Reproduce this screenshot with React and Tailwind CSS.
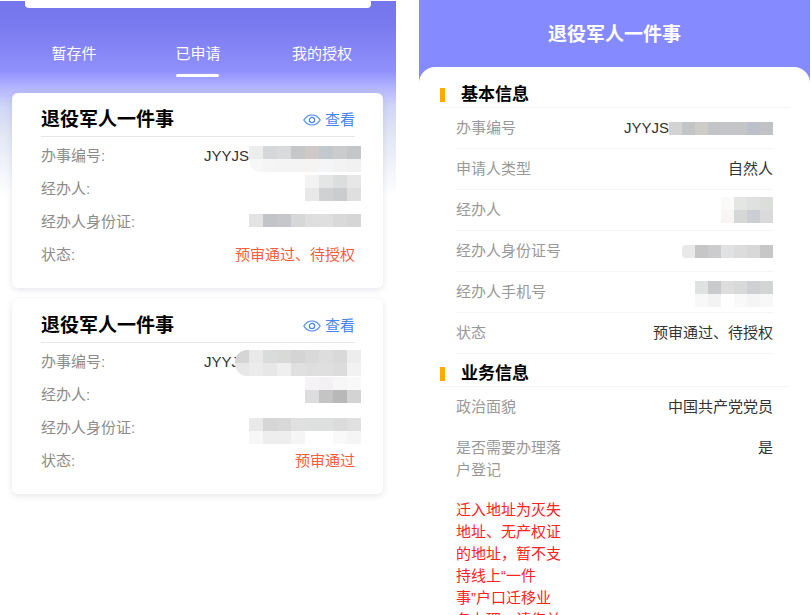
import React, { useState } from 'react';

const tabs = ['暂存件', '已申请', '我的授权'];

// Censored values, one colour per block, row by row ("" leaves the block empty)
const masks = {
  cardNo1: [
    ['#ededed', '#d5d7d8', '#d9dadb', '#c5c7c9', '#cfcac8', '#c3c8cf', '#cbcccd', '#c5c6c7'],
    ['#f7f7f7', '#f5f5f5', '#f4f4f4', '#f4f4f4', '#f5f4f3', '#f4f5f6', '#f3f3f3', '#f1f1f1'],
  ],
  cardName1: [
    ['#f3f3f3', '#e4e5e5', '#dcdedd', '#e6e7e6'],
    ['#e8e8e8', '#cfd1d2', '#cacccd', '#dfdfdf'],
  ],
  cardId1: [['#e3e3e4', '#c3c4c8', '#c6c7ca', '#d6d7d8', '#dddedd', '#dfdfdf', '#d9d9da', '#d6d6d7']],
  cardNo2: [
    ['#d5d5d5', '#e9e9e9', '#dadbdb', '#d8dad8', '#d4d4d4', '#d9d9d9', '#dddddd', '#d9d9d9', '#ededed'],
    ['#e7e7e7', '#ebebeb', '#e7e7e7', '#efefef', '#e0e0e0', '#dedede', '#dfdfdf', '#dcdcdc', '#f2f2f2'],
  ],
  cardName2: [
    ['#f5f3f5', '#f3f1f3', '#f7f7f7', '#f9f9f9'],
    ['#dddcde', '#c4c4c5', '#b8b8b9', '#d3d3d4'],
  ],
  cardId2: [
    ['#e9e9e9', '#d6d6d6', '#d8d8d8', '#e0e0e0', '#dee0df', '#dee0df', '#dbdcdb', '#e0e0e0'],
    ['#f7f7f7', '#eeeeee', '#eeeeee', '#f5f5f5', '', '', '#f9f9f9', '#f5f5f5'],
  ],
  detailNo: [['#d3d3d4', '#c3c4c6', '#cdccc8', '#c2c4c8', '#c3c5c9', '#c4c5c7', '#bdc0c9', '#c0c2c5']],
  detailName: [
    ['#fafaf9', '#e4e6e4', '#dfe1e0', '#dcdedc'],
    ['#f7f6f4', '#d6d8d7', '#ccced3', '#dadada'],
  ],
  detailId: [['#e9e9e9', '#c6c6c7', '#ccccce', '#e1e2e3', '#dcdcdd', '#d8d8d9', '#c7c7c8']],
  detailPhone: [
    ['#e0e1e1', '#c9cacb', '#dddddd', '#d8d9d9', '#cfd0d1', '#d3d4d4'],
    ['#f8f8f8', '#f3f3f3', '', '#f9f9f9', '#f5f5f5', '#f8f8f8'],
  ],
};

const applications = [
  {
    title: '退役军人一件事',
    rows: [
      { label: '办事编号', value: 'JYYJS', mask: masks.cardNo1, maskClass: 'rounded-bl-xl mt-1' },
      { label: '经办人', mask: masks.cardName1, maskClass: 'mb-1' },
      { label: '经办人身份证', mask: masks.cardId1, maskClass: 'mb-1' },
      { label: '状态', value: '预审通过、待授权', status: true },
    ],
  },
  {
    title: '退役军人一件事',
    rows: [
      { label: '办事编号', value: 'JYYJ', mask: masks.cardNo2, maskClass: 'rounded-l-xl -ml-1' },
      { label: '经办人', mask: masks.cardName2, maskClass: '-mt-3' },
      { label: '经办人身份证', mask: masks.cardId2, maskClass: 'mt-1' },
      { label: '状态', value: '预审通过', status: true },
    ],
  },
];

const basicInfo = [
  { label: '办事编号', value: 'JYYJS', mask: masks.detailNo },
  { label: '申请人类型', value: '自然人' },
  { label: '经办人', mask: masks.detailName },
  { label: '经办人身份证号', mask: masks.detailId, maskClass: 'rounded-l' },
  { label: '经办人手机号', mask: masks.detailPhone, maskClass: 'mt-1' },
  { label: '状态', value: '预审通过、待授权' },
];

const businessInfo = [
  { label: '政治面貌', value: '中国共产党党员' },
  { label: '是否需要办理落户登记', value: '是' },
];

const Mask = ({ cells, size, className = '' }) => {
  const cols = cells[0].length;
  return (
    <svg
      width={cols * size}
      height={cells.length * 13}
      viewBox={`0 0 ${cols} ${cells.length}`}
      preserveAspectRatio="none"
      shapeRendering="crispEdges"
      className={`shrink-0 ${className}`}
      aria-hidden="true"
    >
      {cells.map((row, y) =>
        row.map((color, x) => color && <rect key={`${x}-${y}`} x={x} y={y} width="1" height="1" fill={color} />)
      )}
    </svg>
  );
};

const EyeIcon = () => (
  <svg viewBox="0 0 18 14" className="w-[18px] h-[14px]" fill="none" stroke="currentColor" strokeWidth="1.2">
    <path d="M.8 6C3 2.600 5.800 1 9 1s6 1.600 8.200 5c-2.200 3.400-5 5-8.200 5S3 9.400.8 6z" />
    <circle cx="9" cy="6" r="2.600" />
  </svg>
);

const ApplicationCard = ({ item }) => (
  <article className="bg-white rounded-md shadow-[0_2px_6px_rgba(60,70,110,0.13)] pl-[29px] pr-7 pt-3 pb-4">
    <div className="flex items-center justify-between h-8 border-b border-gray-200">
      <h2 className="text-[19px] font-bold text-black">{item.title}</h2>
      <button className="flex items-center gap-1 text-[15px] text-[#4a86f0] cursor-pointer">
        <EyeIcon />
        查看
      </button>
    </div>
    <dl className="pt-[3px]">
      {item.rows.map((row) => (
        <div key={row.label} className="flex items-center justify-between h-[33px]">
          <dt className="text-[#8c8c8c]">{row.label}:</dt>
          <dd className={`flex items-center ${row.status ? 'text-[#fa5c3c]' : 'text-[#333]'} ${row.mask ? '-mr-[6px]' : ''}`}>
            {row.value}
            {row.mask && <Mask cells={row.mask} size={14} className={row.maskClass} />}
          </dd>
        </div>
      ))}
    </dl>
  </article>
);

const MyApplications = () => {
  const [active, setActive] = useState('已申请');

  return (
    <section className="pt-px">
      <div className="bg-[linear-gradient(to_bottom,#7575ec_0px,#7a7aef_25px,#9090fd_70px,#b2b3fe_86px,#cfd5f6_105px,#e3e7f5_135px,#fff_195px)]">
        <div className="h-[7px] mx-[25px] bg-white rounded-b-sm"></div>
        <nav className="grid grid-cols-3 px-3 pt-[34px] pb-4">
          {tabs.map((tab) => (
            <button
              key={tab}
              onClick={() => setActive(tab)}
              className="flex flex-col items-center gap-2 text-white cursor-pointer"
            >
              <span className="leading-6">{tab}</span>
              <span className={`w-[43px] h-[3px] rounded-full ${active === tab ? 'bg-white' : ''}`}></span>
            </button>
          ))}
        </nav>
        <div className="flex flex-col gap-[11px] pl-3 pr-[13px] pb-3">
          {applications.map((item, i) => (
            <ApplicationCard key={i} item={item} />
          ))}
        </div>
      </div>
    </section>
  );
};

const SectionTitle = ({ children }) => (
  <div className="flex items-center gap-4 h-[33px] pt-2 ml-[21px] mr-5 border-b border-gray-100">
    <span className="w-[5px] h-[14px] bg-[#ffaa00]"></span>
    <h2 className="text-[17px] font-bold text-black">{children}</h2>
  </div>
);

const DetailRow = ({ row, border }) => (
  <div className={`flex items-start justify-between py-[9px] border-b ${border ? 'border-gray-100' : 'border-transparent'}`}>
    <dt className="w-[106px] text-[#999]">{row.label}</dt>
    <dd className="flex items-center h-[22px] text-[#333]">
      {row.value}
      {row.mask && <Mask cells={row.mask} size={13} className={row.maskClass} />}
    </dd>
  </div>
);

const ApplicationDetail = () => (
  <section className="bg-[#868aff] mr-px">
    <h1 className="h-[67px] pt-1 flex items-center justify-center text-[19px] font-bold text-white">退役军人一件事</h1>
    <div className="bg-white rounded-t-2xl pt-2">
      <SectionTitle>基本信息</SectionTitle>
      <dl className="px-[37px] leading-[22px]">
        {basicInfo.map((row) => (
          <DetailRow key={row.label} row={row} border />
        ))}
      </dl>
      <SectionTitle>业务信息</SectionTitle>
      <dl className="px-[37px] leading-[22px]">
        {businessInfo.map((row) => (
          <DetailRow key={row.label} row={row} />
        ))}
      </dl>
      <p className="ml-[37px] w-[106px] pt-2 leading-[22px] text-[#ff2222]">
        迁入地址为灭失地址、无产权证的地址，暂不支持线上“一件事”户口迁移业务办理，请您前往
      </p>
    </div>
  </section>
);

const App = () => {
  return (
    <main className="grid grid-cols-[101fr_100fr] gap-x-[23px] items-start bg-white text-[15px] font-['Liberation_Sans','Noto_Sans_CJK_SC',sans-serif]">
      <MyApplications />
      <ApplicationDetail />
    </main>
  );
};

export default App;
